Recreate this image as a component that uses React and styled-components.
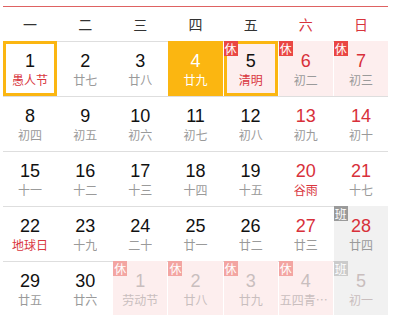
import React from "react";
import styled, { createGlobalStyle, css } from "styled-components";

const Global = createGlobalStyle`
  html, body { margin: 0; padding: 0; background: #fff; }
  body { font-family: "Liberation Sans", "Noto Sans CJK SC", sans-serif; }
`;

const Wrap = styled.div`
  padding: 6px 0 0 3px;
  width: 385px;
`;

const Header = styled.div`
  display: grid;
  grid-template-columns: repeat(7, 1fr);
  column-gap: 1px;
  height: 34px;
  border-top: 1px solid #de6262;
`;

const Week = styled.div`
  display: flex;
  align-items: center;
  justify-content: center;
  font-family: "Noto Sans CJK SC", sans-serif;
  font-size: 14px;
  color: ${(p) => (p.$weekend ? "#d8343c" : "#333")};
`;

const Row = styled.div`
  display: grid;
  grid-template-columns: repeat(7, 1fr);
  column-gap: 1px;
  height: 55px;
  box-shadow: inset 0 1px 0 #dedede;
`;

const Cell = styled.div`
  position: relative;
  display: flex;
  flex-direction: column;
  align-items: center;
  justify-content: center;
  padding-top: 1px;
  box-sizing: border-box;
  height: 55px;
  min-width: 0;
  background: ${(p) =>
    p.$today ? "#fbb611" : p.$rest ? "#fdeeee" : p.$work ? "#f1f1f1" : "transparent"};
  ${(p) =>
    p.$mark &&
    css`
      box-shadow: inset 0 0 0 3px #fbb611;
    `}
`;

const Num = styled.div`
  font-family: "Liberation Sans", Arial, sans-serif;
  font-size: 18px;
  line-height: 20px;
  color: ${(p) =>
    p.$faded ? "#c9bebe" : p.$today ? "#fff" : p.$red ? "#d8303a" : "#111"};
`;

const Lunar = styled.div`
  font-family: "Noto Sans CJK SC", sans-serif;
  font-size: 12px;
  line-height: 16px;
  margin-top: 1px;
  max-width: 52px;
  white-space: nowrap;
  overflow: hidden;
  text-overflow: ellipsis;
  color: ${(p) =>
    p.$faded ? "#c9bebe" : p.$today ? "#fff" : p.$fest ? "#d9363e" : "#9a9a9a"};
`;

const Badge = styled.span`
  position: absolute;
  top: 0;
  left: 0;
  width: 14px;
  height: 15px;
  display: flex;
  align-items: center;
  justify-content: center;
  font-family: "Noto Sans CJK SC", sans-serif;
  font-size: 12px;
  line-height: 1;
  color: #fff;
  background: ${(p) =>
    p.$type === "work"
      ? p.$faded
        ? "#cbcbcb"
        : "#9a9a9a"
      : p.$faded
      ? "#f3a5a2"
      : "#ea4744"};
`;

const weeks = ["一", "二", "三", "四", "五", "六", "日"];

const rows = [
  [
    { n: 1, l: "愚人节", fest: true, mark: true },
    { n: 2, l: "廿七" },
    { n: 3, l: "廿八" },
    { n: 4, l: "廿九", today: true },
    { n: 5, l: "清明", fest: true, rest: true, mark: true },
    { n: 6, l: "初二", rest: true },
    { n: 7, l: "初三", rest: true },
  ],
  [
    { n: 8, l: "初四" },
    { n: 9, l: "初五" },
    { n: 10, l: "初六" },
    { n: 11, l: "初七" },
    { n: 12, l: "初八" },
    { n: 13, l: "初九" },
    { n: 14, l: "初十" },
  ],
  [
    { n: 15, l: "十一" },
    { n: 16, l: "十二" },
    { n: 17, l: "十三" },
    { n: 18, l: "十四" },
    { n: 19, l: "十五" },
    { n: 20, l: "谷雨", fest: true },
    { n: 21, l: "十七" },
  ],
  [
    { n: 22, l: "地球日", fest: true },
    { n: 23, l: "十九" },
    { n: 24, l: "二十" },
    { n: 25, l: "廿一" },
    { n: 26, l: "廿二" },
    { n: 27, l: "廿三" },
    { n: 28, l: "廿四", work: true },
  ],
  [
    { n: 29, l: "廿五" },
    { n: 30, l: "廿六" },
    { n: 1, l: "劳动节", rest: true, faded: true },
    { n: 2, l: "廿八", rest: true, faded: true },
    { n: 3, l: "廿九", rest: true, faded: true },
    { n: 4, l: "五四青年节", rest: true, faded: true },
    { n: 5, l: "初一", work: true, faded: true },
  ],
];

export default function App() {
  return (
    <>
      <Global />
      <Wrap>
        <Header>
          {weeks.map((w, i) => (
            <Week key={w} $weekend={i >= 5}>
              {w}
            </Week>
          ))}
        </Header>
        {rows.map((row, ri) => (
          <Row key={ri}>
            {row.map((d, ci) => (
              <Cell
                key={ci}
                $today={d.today}
                $rest={d.rest}
                $work={d.work}
                $mark={d.mark}
              >
                {d.rest && <Badge $type="rest" $faded={d.faded}>休</Badge>}
                {d.work && <Badge $type="work" $faded={d.faded}>班</Badge>}
                <Num $red={ci >= 5} $today={d.today} $faded={d.faded}>
                  {d.n}
                </Num>
                <Lunar $fest={d.fest} $today={d.today} $faded={d.faded}>
                  {d.l}
                </Lunar>
              </Cell>
            ))}
          </Row>
        ))}
      </Wrap>
    </>
  );
}
